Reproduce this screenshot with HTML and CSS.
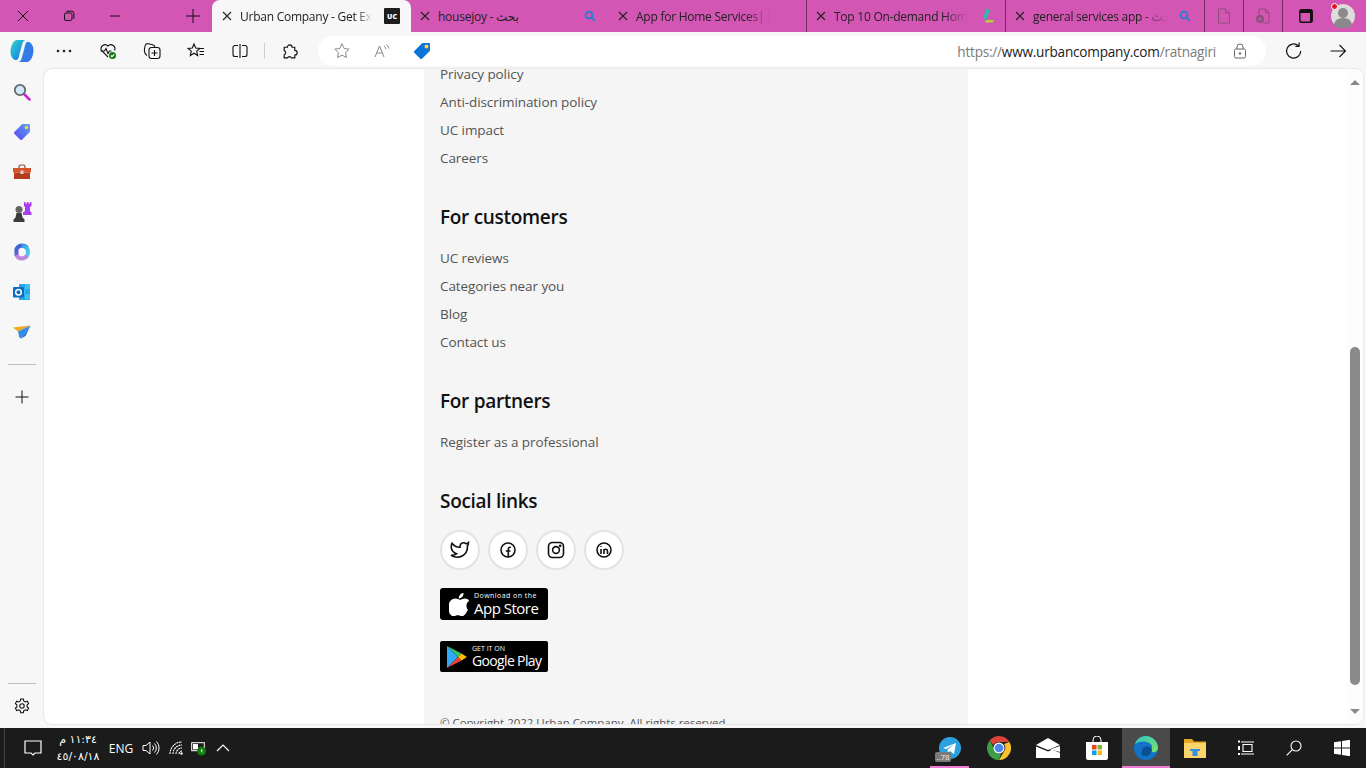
FILE: index.html
```html
<!DOCTYPE html>
<html lang="en">
<head>
<meta charset="utf-8">
<title>Urban Company</title>
<link rel="stylesheet" href="styles.css">
</head>
<body>
<div class="app">
  <header class="tabstrip">
    <div class="winbtn"><svg width="14" height="14" viewBox="0 0 14 14" class="ln"><path d="M2 2l10 10M12 2L2 12"/></svg></div>
    <div class="winbtn"><svg width="12" height="12" viewBox="0 0 12 12" class="ln"><rect x="1.500" y="3" width="7.500" height="7.500" rx="1.500"/><path d="M3.500 1.200h5a2.400 2.400 0 0 1 2.400 2.400v5"/></svg></div>
    <div class="winbtn"><svg width="12" height="12" viewBox="0 0 12 12" class="ln"><path d="M1 6h10"/></svg></div>
    <div class="newtab"><svg width="16" height="16" viewBox="0 0 16 16" class="ln"><path d="M8 1v14M1 8h14"/></svg></div>

    <div class="tab active">
      <svg class="x" width="10" height="10" viewBox="0 0 10 10"><path d="M1 1l8 8M9 1L1 9"/></svg>
      <span class="title t-active">Urban Company - Get Exp</span>
      <span class="favuc">UC</span>
    </div>
    <div class="tab second">
      <svg class="x" width="10" height="10" viewBox="0 0 10 10"><path d="M1 1l8 8M9 1L1 9"/></svg>
      <span class="title plain">housejoy - بحث</span>
      <svg class="fav" width="12" height="12" viewBox="0 0 12 12"><circle cx="5" cy="5" r="3.400"/><path d="M7.600 7.600l3.200 3.200"/></svg>
    </div>
    <div class="tab">
      <svg class="x" width="10" height="10" viewBox="0 0 10 10"><path d="M1 1l8 8M9 1L1 9"/></svg>
      <span class="title t-mid">App for Home Services| H</span>
    </div>
    <div class="tab sep wider">
      <svg class="x" width="10" height="10" viewBox="0 0 10 10"><path d="M1 1l8 8M9 1L1 9"/></svg>
      <span class="title t-mid">Top 10 On-demand Home</span>
      <svg class="favapp" width="14" height="16" viewBox="0 0 14 16"><path d="M5 1h4L6 11H2z" fill="#2fb9a6"/><path d="M5 12h8l-1 2.500H4z" fill="#b5d334"/></svg>
    </div>
    <div class="tab sep wider">
      <svg class="x" width="10" height="10" viewBox="0 0 10 10"><path d="M1 1l8 8M9 1L1 9"/></svg>
      <span class="title t-mid">general services app - بحث</span>
      <svg class="fav" width="12" height="12" viewBox="0 0 12 12"><circle cx="5" cy="5" r="3.400"/><path d="M7.600 7.600l3.200 3.200"/></svg>
    </div>
    <div class="mini sep"><svg width="14" height="16" viewBox="0 0 14 16" class="dim"><path d="M1.500 1h7l4 4v10h-11zM8.500 1v4h4"/></svg></div>
    <div class="mini sep"><svg width="16" height="16" viewBox="0 0 16 16" class="dim"><path d="M4 7V1h6.500l3.500 3.500V15H8M10.500 1v3.500H14"/><circle cx="5" cy="11" r="4" fill="#8d4f7c" stroke="none"/><path d="M3.500 9.500l3 3M6.500 9.500l-3 3" stroke="#d355b4"/></svg></div>
    <div class="mini sep wide"><svg width="14" height="14" viewBox="0 0 14 14"><rect x=".8" y=".8" width="12.400" height="12.400" rx="2" fill="none" stroke="#111" stroke-width="1.500"/><path d="M1 1h12v3H1z" fill="#111"/><path d="M11 4h2v9h-2z" fill="#111"/></svg></div>
    <div class="avatar"><svg width="24" height="24" viewBox="0 0 24 24"><circle cx="12" cy="12" r="12" fill="#dcdcdc"/><circle cx="12" cy="9" r="5" fill="#8a8a8a"/><path d="M3 21c1-6 5-7 9-7s8 1 9 7a12 12 0 0 1-18 0z" fill="#8a8a8a"/></svg><span class="dot"></span></div>
  </header>

  <nav class="toolbar">
    <div class="tool copilot"><svg width="24" height="24" viewBox="0 0 24 24"><defs><linearGradient id="cpa" x1="0" y1="0" x2="1" y2="1"><stop offset="0" stop-color="#2fd6c3"/><stop offset=".6" stop-color="#1c9be0"/><stop offset="1" stop-color="#1c56dd"/></linearGradient><linearGradient id="cpb" x1="0" y1="0" x2="1" y2="1"><stop offset="0" stop-color="#1e8de0"/><stop offset="1" stop-color="#3f6ff0"/></linearGradient></defs><path d="M7 1h8c-2 1-2.500 3-3 5L9.500 15C9 18 8 22 5 21 2.500 20 .5 17 .5 13 .5 8 3 1 7 1z" fill="url(#cpa)"/><path d="M17 23H9c2-1 2.500-3 3-5l2.500-9C15 6 16 2 19 3c2.500 1 4.500 4 4.500 8 0 5-2.500 12-6.500 12z" fill="url(#cpb)"/></svg></div>
    <div class="tool dots"><svg width="16" height="4" viewBox="0 0 16 4"><circle cx="2" cy="2" r="1.300"/><circle cx="8" cy="2" r="1.300"/><circle cx="14" cy="2" r="1.300"/></svg></div>
    <div class="tool health"><svg width="18" height="18" viewBox="0 0 18 18" class="ico"><path d="M9 15L2.500 8.500a4 4 0 0 1 6.500-4.500 4 4 0 0 1 6.500 4.500"/><path d="M1.500 9h4l1.500-2.500 2 5 1.500-2.500h2"/><circle cx="13.500" cy="13.500" r="3.500" fill="#107c10" stroke="none"/><path d="M11.800 13.500l1.200 1.200 2.200-2.300" stroke="#fff"/></svg></div>
    <div class="tool coll"><svg width="18" height="18" viewBox="0 0 18 18" class="ico"><path d="M4 13.500C2 12 1 10 1.500 7l.5-3c.3-1.500 1.500-2.500 3-2.300L9 2.500c1.500.3 2.500 1 3 2.500"/><rect x="6" y="5.500" width="11" height="11" rx="2.500"/><path d="M11.500 8v6M8.500 11h6"/></svg></div>
    <div class="tool fav-tool"><svg width="18" height="18" viewBox="0 0 18 18" class="ico"><path d="M7 2l1.700 4 4.300.4-3.300 2.800 1 4.300L7 11.200l-3.700 2.300 1-4.300L1 6.400 5.300 6z"/><path d="M12 6.500h5M12.500 9.500h4.500M12.500 12.500h4.500"/></svg></div>
    <div class="tool split"><svg width="16" height="14" viewBox="0 0 16 14" class="ico"><path d="M8 0v14M6 1.500H3A2 2 0 0 0 1 3.500v7a2 2 0 0 0 2 2h3M10 1.500h3a2 2 0 0 1 2 2v7a2 2 0 0 1-2 2h-3"/></svg></div>
    <span class="vsep"></span>
    <div class="tool ext"><svg width="17" height="17" viewBox="0 0 16 16" class="ico"><path d="M3 4h3a2.200 2.200 0 0 1 4.400 0H13v3a2.200 2.200 0 0 1 0 4.400V14H9.800a2 2 0 0 0-3.600 0H3v-3a2 2 0 0 0 0-3.800z" stroke-linejoin="round"/></svg></div>
    <div class="address">
      <svg class="addr-star" width="18" height="18" viewBox="0 0 18 18"><path d="M9 1.800l2.200 4.700 5 .6-3.700 3.500 1 5L9 13.100l-4.500 2.500 1-5L1.800 7.100l5-.6z"/></svg>
      <svg class="addr-read" width="16" height="16" viewBox="0 0 16 16"><path d="M1 14L5.500 3 10 14M2.800 10h5.400M10 3a5 5 0 0 1 2 3M12.500 1.500a7 7 0 0 1 2.500 4"/></svg>
      <svg class="addr-tag" width="18" height="18" viewBox="0 0 18 18"><path d="M10 1h6a1 1 0 0 1 1 1v6a2 2 0 0 1-.5 1.200L9 16.700a1.200 1.200 0 0 1-1.700 0L1.300 10.700a1.200 1.200 0 0 1 0-1.700L8.800 1.500A2 2 0 0 1 10 1z" fill="#0a74d8"/><circle cx="13.500" cy="4.500" r="2" fill="#ffd23f"/></svg>
      <span class="url">https://<b>www.urbancompany.com</b>/ratnagiri</span>
      <svg class="addr-lock" width="14" height="16" viewBox="0 0 14 16"><rect x="1.500" y="6" width="11" height="9" rx="1.500"/><path d="M4 6V4a3 3 0 0 1 6 0v2"/><circle cx="7" cy="10.500" r=".8" fill="#555"/></svg>
    </div>
    <div class="tool reload"><svg width="18" height="18" viewBox="0 0 16 16" class="ico"><path d="M14 8a6.300 6.300 0 1 1-2.200-4.800M12.500 .5v3.300H9.200"/></svg></div>
    <div class="tool forward"><svg width="16" height="14" viewBox="0 0 16 14" class="ico"><path d="M.5 7h15M9.500 1l6 6-6 6"/></svg></div>
  </nav>

  <div class="main">
    <aside class="sidebar">
      <div class="side first"><svg width="18" height="18" viewBox="0 0 18 18"><path d="M11 11l5.500 5.500" stroke="#d020d8" stroke-width="2.500" stroke-linecap="round"/><circle cx="7" cy="7" r="5.200" fill="#cfe9fb" stroke="#666" stroke-width="1.800"/></svg></div>
      <div class="side"><svg width="18" height="18" viewBox="0 0 18 18"><defs><linearGradient id="tg" x1="1" y1="0" x2="0" y2="1"><stop offset="0" stop-color="#5aa5f5"/><stop offset="1" stop-color="#5a45f2"/></linearGradient></defs><path d="M10 1h6a1 1 0 0 1 1 1v6a2 2 0 0 1-.5 1.200L9 16.700a1.200 1.200 0 0 1-1.700 0L1.300 10.700a1.200 1.200 0 0 1 0-1.700L8.800 1.500A2 2 0 0 1 10 1z" fill="url(#tg)"/><circle cx="13.500" cy="4.500" r="1.800" fill="#ffd23f"/></svg></div>
      <div class="side"><svg width="18" height="16" viewBox="0 0 18 16"><path d="M6 4V2.500A1.500 1.500 0 0 1 7.500 1h3A1.500 1.500 0 0 1 12 2.500V4" fill="none" stroke="#8a4a35" stroke-width="1.200"/><rect y="4" width="18" height="4.500" fill="#d8532b"/><rect x="1" y="8.500" width="16" height="6.500" fill="#b63d1c"/><rect x="7.500" y="6.500" width="3" height="3.500" rx=".5" fill="#d8d8d8"/></svg></div>
      <div class="side"><svg width="20" height="20" viewBox="0 0 20 20"><path d="M12 0h1.500v1.500H15V0h1.500v1.500H18V0h1.500v4L18 5v4l1.500 1.500V13H11v-2.500L13 9V5l-1-1z" fill="#a93df0"/><circle cx="7" cy="7.500" r="3.500" fill="#666"/><path d="M4.500 11h5l1 4.500 2 2V20H1.500v-2.500l2-2z" fill="#3b3b3b"/></svg></div>
      <div class="side"><svg width="18" height="18" viewBox="0 0 18 18" fill="none" stroke-width="4"><defs><linearGradient id="m1" x1="0" y1="0" x2="1" y2="1"><stop offset="0" stop-color="#3a62d8"/><stop offset="1" stop-color="#8c5bd6"/></linearGradient><linearGradient id="m2" x1="0" y1="0" x2="1" y2="1"><stop offset="0" stop-color="#2aa7e8"/><stop offset="1" stop-color="#50d2e6"/></linearGradient></defs><path d="M3.500 13V6A6.500 6.500 0 0 1 9 2.500c3 0 4.500 1.500 5 2.500" stroke="url(#m1)"/><path d="M9 3c3.500 0 6 2.500 6 6s-1 4-2 5" stroke="url(#m2)"/><path d="M3.500 12c1 2.500 3 3.500 5.500 3.500s4-1.500 5-3" stroke="#bb86de"/></svg></div>
      <div class="side"><svg width="18" height="18" viewBox="0 0 18 18"><path d="M6 1h11v15a1 1 0 0 1-1 1H6z" fill="#28a8ea"/><path d="M12 1h5v5h-5zM6 6h6v5H6zM12 11h5v5h-5z" fill="#50d9ff" opacity=".55"/><rect y="4" width="11" height="10.500" rx="1" fill="#0a6cc4"/><circle cx="5.500" cy="9.200" r="2.800" fill="none" stroke="#fff" stroke-width="1.500"/></svg></div>
      <div class="side"><svg width="18" height="14" viewBox="0 0 18 14"><path d="M0 2.500L17.500.5 5 6.500z" fill="#f5a623"/><path d="M17.500.5L5 6.500l3 7z" fill="#2f8fe8"/><path d="M17.500.5L8 13.500l4.500-2.500z" fill="#1e6fd0"/><path d="M5 6.500l1.500 6 1.500 1z" fill="#0e5aa8"/></svg></div>
      <hr class="side-rule r1">
      <div class="side"><svg width="14" height="14" viewBox="0 0 14 14" class="ln"><path d="M7 .5v13M.5 7h13"/></svg></div>
      <hr class="side-rule r2">
      <div class="side"><svg width="16" height="16" viewBox="0 0 16 16" class="ico"><path d="M6.700 1h2.600l.4 2 1.700 1 1.900-.7 1.300 2.300-1.500 1.300v2l1.500 1.300-1.300 2.300-1.900-.7-1.700 1-.4 2H6.700l-.4-2-1.700-1-1.900.7-1.300-2.300 1.500-1.300v-2L1.400 5.600l1.300-2.300 1.900.7 1.700-1z"/><circle cx="8" cy="8" r="2.200"/></svg></div>
    </aside>

    <section class="page">
      <div class="column">
        <ul class="links first-list">
          <li>Privacy policy</li>
          <li>Anti-discrimination policy</li>
          <li>UC impact</li>
          <li>Careers</li>
        </ul>
        <h2>For customers</h2>
        <ul class="links">
          <li>UC reviews</li>
          <li>Categories near you</li>
          <li>Blog</li>
          <li>Contact us</li>
        </ul>
        <h2>For partners</h2>
        <ul class="links">
          <li>Register as a professional</li>
        </ul>
        <h2>Social links</h2>
        <div class="socials">
          <span class="soc"><svg width="20" height="18" viewBox="0 0 20 18" class="so"><path d="M18.500 1.500c-.8.700-1.700 1.100-2.500 1.300A3.500 3.500 0 0 0 10 5.300v1C7 6.500 4 5 2 2.300c0 0-3.500 7 4.500 10.500-1.500 1-3.500 1.700-5.500 1.600 8 4.400 16.500 0 16.500-8.800 0-.2 0-.5-.1-.7.800-.8 1.100-1.800 1.100-3.400z"/></svg></span>
          <span class="soc"><svg width="18" height="18" viewBox="0 0 18 18" class="so"><circle cx="9" cy="9" r="7"/><path d="M9.300 16V8.500c0-1.700.7-2.300 2.600-2.200M6.800 10h4.700"/></svg></span>
          <span class="soc"><svg width="18" height="18" viewBox="0 0 18 18" class="so"><rect x="1.500" y="1.500" width="15" height="15" rx="4"/><circle cx="9" cy="9" r="3.400"/><circle cx="13.200" cy="4.800" r=".6" fill="#111"/></svg></span>
          <span class="soc"><svg width="18" height="18" viewBox="0 0 18 18" class="so"><circle cx="9" cy="9" r="7"/><path d="M6 8v5M6 5.200v.8M9 13V8M9 10.300c0-2.800 3.500-2.800 3.500 0V13"/></svg></span>
        </div>
        <div class="badge apple">
          <svg width="20" height="24" viewBox="0 0 20 24"><path d="M14.500 1c.1 1.500-.4 2.800-1.300 3.800-.9 1-2.200 1.700-3.400 1.600-.2-1.400.5-2.800 1.300-3.700C12 1.700 13.400 1 14.500 1zM18.900 17.800c-.6 1.300-.9 1.900-1.600 3-1 1.600-2.500 3.500-4.300 3.500-1.600 0-2-1-4.200-1-2.200 0-2.700 1-4.300 1-1.800 0-3.200-1.800-4.200-3.300C-.5 17-1 12 1 9.400c1.300-1.800 3.400-2.800 5.400-2.800 2 0 3.200 1.100 4.900 1.100 1.600 0 2.500-1.100 4.800-1.100 1.800 0 3.600 1 4 2.300-3.600 2-3 7.100-1.200 8.900z" fill="#fff"/></svg>
          <span class="badge-text"><small>Download on the</small><strong>App Store</strong></span>
        </div>
        <div class="badge play">
          <svg width="20" height="22" viewBox="0 0 20 22"><path d="M0 0l11 11L0 22z" fill="#2fa8f5"/><path d="M0 0l14.500 7.500L11 11z" fill="#35c46b"/><path d="M0 22l14.500-7.500L11 11z" fill="#ea4335"/><path d="M14.500 7.500L20 11l-5.500 3.500L11 11z" fill="#fbbc04"/></svg>
          <span class="badge-text gp"><small>GET IT ON</small><strong>Google Play</strong></span>
        </div>
        <p class="copy">© Copyright 2022 Urban Company. All rights reserved.</p>
      </div>
      <div class="scroll">
        <span class="arrow up"></span>
        <span class="thumb"></span>
        <span class="arrow down"></span>
      </div>
    </section>
  </div>

  <footer class="taskbar">
    <span class="tb-edge"></span>
    <div class="tray">
      <svg class="t-note" width="18" height="18" viewBox="0 0 18 18"><path d="M1 2h16v12h-6l-2 2-2-2H1z"/></svg>
      <div class="clock"><span>١١:٣٤ م</span><span>٤٥/٠٨/١٨</span></div>
      <span class="lang">ENG</span>
      <svg class="t-vol" width="18" height="16" viewBox="0 0 18 16"><path d="M1 5.500h3L8 2v12l-4-3.500H1zM10.500 5.500a3.500 3.500 0 0 1 0 5M12.500 3.500a6.500 6.500 0 0 1 0 9M14.500 1.500a9.500 9.500 0 0 1 0 13"/></svg>
      <svg class="t-wifi" width="14" height="14" viewBox="0 0 14 14"><path d="M1 13A12 12 0 0 1 13 1M4 13A9 9 0 0 1 13 4M7 13a6 6 0 0 1 6-6M10 13a3 3 0 0 1 3-3" stroke-dasharray="2 .6"/><circle cx="12.500" cy="12.500" r="1.200" fill="#fff" stroke="none"/></svg>
      <svg class="t-bat" width="16" height="16" viewBox="0 0 16 16"><rect x=".7" y="2.700" width="12.600" height="8" fill="none" stroke="#fff"/><rect x="2" y="4" width="5" height="5.400" fill="#fff"/><circle cx="10.500" cy="11" r="4.500" fill="#107c10"/><path d="M10.500 8.500l1.500 2h-1l.5 3-2-3h1z" fill="#fff"/></svg>
      <svg class="t-chev" width="14" height="8" viewBox="0 0 14 8"><path d="M1 7l6-6 6 6"/></svg>
    </div>
    <div class="apps">
      <div class="app-i running tele"><svg width="22" height="22" viewBox="0 0 22 22"><circle cx="11" cy="11" r="11" fill="#2aa1de"/><path d="M4 11l13-5-2 11-4-3-2 2-.5-3.500L15 7.500 7 12z" fill="#fff"/></svg><span class="tbadge">..78</span></div>
      <div class="app-i"><svg width="24" height="24" viewBox="0 0 24 24"><path d="M12 0a12 12 0 0 1 10.400 6H12a6 6 0 0 0-5.500 3.500L2.700 4.500A12 12 0 0 1 12 0z" fill="#db4437"/><path d="M22.400 6A12 12 0 0 1 12 24l5.200-9A6 6 0 0 0 17 8z" fill="#fbc02d"/><path d="M12 24A12 12 0 0 1 2.700 4.500l5 9A6 6 0 0 0 14 18z" fill="#3c9e47"/><circle cx="12" cy="12" r="5.500" fill="#fff"/><circle cx="12" cy="12" r="4.300" fill="#4a87ee"/></svg></div>
      <div class="app-i"><svg width="24" height="20" viewBox="0 0 24 20"><path d="M0 7l12-7 12 7-12 5z" fill="#fff"/><path d="M0 8.500l12 5 4-1.700 8 3V20H0z" fill="#fff"/><path d="M14 11.500L24 8v6z" fill="#fff"/></svg></div>
      <div class="app-i"><svg width="24" height="24" viewBox="0 0 24 24"><path d="M8 6V4a4 4 0 0 1 8 0v2" fill="none" stroke="#fff" stroke-width="1"/><path d="M1 6h22v16a2 2 0 0 1-2 2H3a2 2 0 0 1-2-2z" fill="#fff"/><rect x="7" y="9" width="4.500" height="4.500" fill="#e8481f"/><rect x="12.500" y="9" width="4.500" height="4.500" fill="#7cb82f"/><rect x="7" y="14.500" width="4.500" height="4.500" fill="#0f9de8"/><rect x="12.500" y="14.500" width="4.500" height="4.500" fill="#fcb813"/></svg></div>
      <div class="app-i running current"><svg width="24" height="24" viewBox="0 0 24 24"><defs><linearGradient id="eg" x1="0" y1="0" x2="1" y2="1"><stop offset="0" stop-color="#2fc6c0"/><stop offset="1" stop-color="#7fe36a"/></linearGradient></defs><circle cx="12" cy="12" r="12" fill="#1172c9"/><path d="M1 8C3 2 8 0 12 0c6 0 12 5 12 12 0 3-3 5-6 4-1-3 0-4 0-6-2-5-11-6-17-2z" fill="url(#eg)"/><path d="M8 15c0-4 5-6 9-3 1 1 1 3 0 4-1 4-6 5-9 3-.5-1-.5-2 0-4z" fill="#0c4f8f"/></svg></div>
      <div class="app-i"><svg width="22" height="20" viewBox="0 0 22 20"><path d="M0 1h8l2 2.500h12V7H0z" fill="#e5a823"/><rect y="5" width="22" height="15" fill="#fbd56b"/><path d="M6 11h10v2h-2.500v5h-5v-5H6z" fill="#2f8fe0"/></svg></div>
      <div class="app-i shift-view"><svg width="16" height="16" viewBox="0 0 16 16" class="tv"><path d="M3 2h13M3 14h13M5 4.500h9v7H5z"/><path d="M0 6h2v4H0z" fill="#fff" stroke="none"/><path d="M0 .5h2v2H0zM0 13h2v2H0z" fill="#fff" stroke="none"/></svg></div>
      <div class="app-i shift-search"><svg width="16" height="16" viewBox="0 0 16 16" class="tv"><circle cx="10" cy="6" r="5"/><path d="M6.300 9.700L.7 15.300"/></svg></div>
      <div class="app-i"><svg width="16" height="16" viewBox="0 0 16 16"><path d="M0 2.200l7-1v6.300H0zM8 1l8-1.200v7.700H8zM0 8.500h7v6.300l-7-1zM8 8.500h8v7.700l-8-1.200z" fill="#fff"/></svg></div>
    </div>
  </footer>
</div>
</body>
</html>
```

FILE: styles.css
```css
* { box-sizing: border-box; }
html, body { margin: 0; height: 100%; overflow: hidden; }
body { font-family: "Open Sans", "Noto Sans", "DejaVu Sans", sans-serif; color: #222; }
.app { width: 1366px; height: 768px; display: flex; flex-direction: column; background: #f7f7f7; overflow: hidden; }
svg { display: block; flex: none; }
.ln { fill: none; stroke: #111; stroke-width: 1; }
.ico { fill: none; stroke: #111; stroke-width: 1.1; }

/* tabs */
.tabstrip { height: 32px; flex: none; display: flex; background: #d355b4; align-items: stretch; }
.winbtn { width: 46px; display: flex; align-items: center; justify-content: center; }
.newtab { width: 38px; margin-left: 36px; display: flex; align-items: center; justify-content: center; }
.tab { width: 198px; display: flex; align-items: center; padding-left: 10px; font-size: 12px; color: #222; }
.tab.active { width: 199px; background: #f7f7f7; border-radius: 8px 8px 0 0; }
.tab.second { width: 197px; padding-left: 9px; }
.tab.wider { width: 199px; padding-left: 9px; }
.tab.sep, .mini.sep { border-left: 1px solid #6e2f5f; }
.x { fill: none; stroke: #222; stroke-width: 1.1; margin-right: 8px; }
.title { white-space: nowrap; overflow: hidden; letter-spacing: -.25px; }
.t-active { width: 132px; -webkit-mask-image: linear-gradient(90deg, #000 88%, transparent); mask-image: linear-gradient(90deg, #000 88%, transparent); }
.t-mid { width: 134px; -webkit-mask-image: linear-gradient(90deg, #000 82%, transparent); mask-image: linear-gradient(90deg, #000 82%, transparent); }
.plain { width: 134px; }
.favuc { margin-left: 12px; width: 16px; height: 16px; background: #1d1d1d; color: #fff; font-size: 7px; font-weight: 800; display: flex; align-items: center; justify-content: center; border-radius: 1px; }
.fav { margin-left: 12px; fill: none; stroke: #1f7fd0; stroke-width: 1.8; }
.favapp { margin-left: 13px; }
.mini { width: 39px; display: flex; align-items: center; justify-content: center; }
.mini.wide { width: 47px; }
.dim { fill: none; stroke: #8d4f7c; stroke-width: 1; }
.avatar { margin-left: 2px; width: 24px; display: flex; align-items: center; position: relative; }
.dot { position: absolute; left: 0; top: 3px; width: 7px; height: 7px; border-radius: 50%; background: #e81123; border: 1px solid #fff; }

/* toolbar */
.toolbar { height: 37px; flex: none; display: flex; align-items: center; background: #f7f7f7; padding-top: 1px; }
.tool { width: 44px; display: flex; align-items: center; justify-content: center; }
.tool.dots { width: 40px; margin-right: 2px; }
.dots svg { fill: #222; }
.vsep { width: 1px; height: 16px; background: #cfcfcf; margin: 0 2px; }
.address { width: 948px; height: 30px; margin-left: 7px; background: #fff; border-radius: 15px; display: flex; align-items: center; padding: 0 19px 0 15px; }
.addr-star { fill: none; stroke: #8a8a8a; stroke-width: 1; }
.addr-read { margin-left: 23px; fill: none; stroke: #8a8a8a; stroke-width: 1; }
.addr-tag { margin-left: 23px; }
.url { margin-left: auto; font-size: 13.6px; color: #7a7a7a; white-space: nowrap; letter-spacing: -.23px; }
.url b { font-weight: 400; color: #222; }
.addr-lock { margin-left: 17px; fill: none; stroke: #666; stroke-width: 1; }
.reload { margin-left: 6px; }

/* main */
.main { height: 659px; flex: none; display: flex; }
.sidebar { width: 44px; flex: none; display: flex; flex-direction: column; padding: 2px 0; }
.side { height: 40px; display: flex; align-items: center; justify-content: center; flex: none; }
.side.first { height: 41px; }
.side-rule { width: 28px; height: 1px; border: 0; background: #bdbdbd; margin: 0 0 0 8px; flex: none; }
.r1 { margin-top: 12px; margin-bottom: 12px; }
.r2 { margin-top: auto; margin-bottom: 2px; }
.page { width: 1319px; height: 655px; background: #fff; border-radius: 8px; overflow: hidden; display: flex; box-shadow: 0 0 2px rgba(0,0,0,.2); }
.column { width: 544px; margin-left: 380px; height: 100%; background: #f5f5f5; padding-left: 16px; overflow: hidden; }
.links { list-style: none; margin: 0; padding: 0; }
.first-list { margin-top: -9px; }
.links li { height: 28px; line-height: 28px; font-size: 13.5px; letter-spacing: -.08px; color: #545454; white-space: nowrap; }
h2 { margin: 31px 0 13px; font-size: 19px; line-height: 28px; font-weight: 600; letter-spacing: -.3px; color: #111; }
.socials { display: flex; gap: 8px; margin-top: 15px; }
.soc { width: 40px; height: 40px; border-radius: 50%; background: #fff; border: 2px solid #e3e3e3; display: flex; align-items: center; justify-content: center; }
.so { fill: none; stroke: #111; stroke-width: 1.6; }
.badge { width: 108px; display: flex; align-items: center; background: #000; color: #fff; border-radius: 3px; }
.apple { height: 32px; margin-top: 18px; padding-left: 9px; }
.play { height: 31px; margin-top: 21px; padding-left: 7px; border-radius: 2px; }
.badge-text { display: flex; flex-direction: column; margin-left: 5px; }
.badge-text small { font-size: 7px; line-height: 8px; letter-spacing: .45px; white-space: nowrap; }
.badge-text strong { font-size: 15px; line-height: 16px; font-weight: 500; white-space: nowrap; letter-spacing: -.5px; }
.gp small { letter-spacing: 0; }
.gp strong { font-size: 14px; letter-spacing: -.65px; }
.copy { margin: 42px 0 0; font-size: 11.5px; line-height: 18px; letter-spacing: -.03px; color: #545454; white-space: nowrap; }
.scroll { margin-left: auto; width: 16px; flex: none; background: #fdfdfd; display: flex; flex-direction: column; align-items: center; }
.arrow { width: 0; height: 0; border-left: 5px solid transparent; border-right: 5px solid transparent; flex: none; }
.up { border-bottom: 5px solid #8a8a8a; margin-top: 11px; }
.thumb { width: 10px; height: 338px; margin-top: 262px; background: #8a8a8a; border-radius: 5px; flex: none; }
.down { border-top: 5px solid #8a8a8a; margin-top: 24px; }

/* taskbar */
.taskbar { height: 40px; flex: none; background: #1b1b1b; display: flex; color: #fff; }
.tb-edge { width: 1px; height: 40px; background: #444; margin-left: 4px; flex: none; }
.tray { display: flex; align-items: center; }
.t-note { margin-left: 19px; fill: none; stroke: #fff; stroke-width: 1.2; }
.clock { width: 60px; margin-left: 6px; display: flex; flex-direction: column; align-items: center; font-family: "DejaVu Sans", sans-serif; font-size: 11px; line-height: 17px; direction: rtl; }
.lang { font-size: 12px; width: 26px; text-align: center; }
.t-vol { margin-left: 8px; fill: none; stroke: #fff; stroke-width: 1; }
.t-wifi { margin-left: 9px; fill: none; stroke: #fff; stroke-width: 1.1; }
.t-bat { margin-left: 8px; }
.t-chev { margin-left: 9px; fill: none; stroke: #fff; stroke-width: 1.2; }
.apps { margin-left: auto; display: flex; }
.app-i { width: 49px; height: 40px; display: flex; align-items: center; justify-content: center; position: relative; flex: none; }
.running::after { content: ""; position: absolute; left: 5px; right: 5px; bottom: 0; height: 2px; background: #ef7bd5; }
.current { background: #4a4a4a; width: 48px; margin-left: 1px; }
.current::after { left: 0; right: 0; }
.shift-view { padding-left: 4px; }
.shift-search { padding-left: 2px; }
.tbadge { position: absolute; left: 10px; bottom: 6px; height: 10px; width: 16px; background: #7a7a7a; border-radius: 2px; color: #eee; font-size: 8px; line-height: 10px; text-align: center; }
.tv { fill: none; stroke: #fff; stroke-width: 1.1; }
```
